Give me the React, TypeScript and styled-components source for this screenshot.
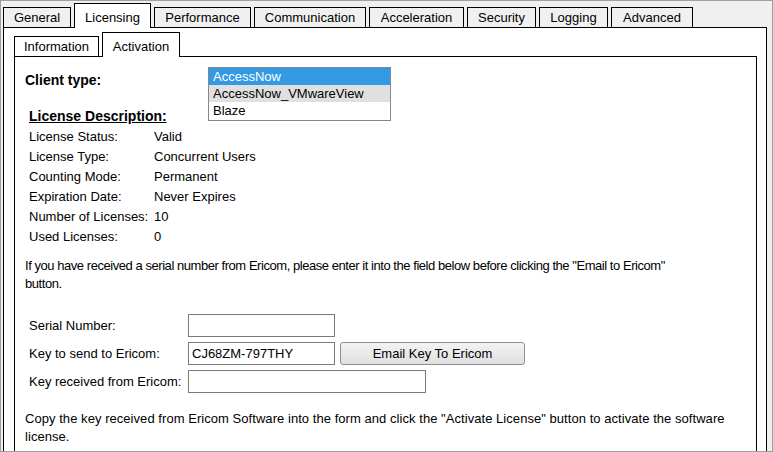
import React from "react";
import styled, { createGlobalStyle } from "styled-components";

const Global = createGlobalStyle`
  html, body { margin: 0; padding: 0; background: #f0f0f0; }
  body {
    font-family: "Liberation Sans", Arial, sans-serif;
    font-size: 13px;
    color: #000;
  }
`;

const Window = styled.div`
  width: 773px;
  height: 452px;
  box-sizing: border-box;
  border: 1px solid #a0a0a0;
  background: #f0f0f0;
  overflow: hidden;
  padding: 2px 5px 0 2px;
  display: flex;
  flex-direction: column;
`;

const TabStrip = styled.div`
  display: flex;
  align-items: flex-end;
  gap: 3px;
`;

const Tab = styled.div<{ $active?: boolean; $w: number }>`
  box-sizing: border-box;
  width: ${(p) => p.$w}px;
  border: 1px solid #000;
  border-bottom: none;
  text-align: center;
  line-height: 18px;
  white-space: nowrap;
  padding: ${(p) => (p.$active ? "5px 0 1px" : "1px 0 0")};
  margin-bottom: ${(p) => (p.$active ? "-1px" : "0")};
  background: ${(p) => (p.$active ? "#fff" : "transparent")};
  position: relative;
  z-index: ${(p) => (p.$active ? 1 : 0)};
`;

const Panel = styled.div<{ $outer?: boolean }>`
  flex: 1;
  display: flex;
  flex-direction: column;
  background: #fff;
  border: 1px solid #000;
  border-bottom: none;
  padding: ${(p) => (p.$outer ? "4px 9px 0 10px" : "0")};
`;

const Body = styled.div`
  padding: 10px 0 0 10px;
`;

const TopGrid = styled.div`
  display: grid;
  grid-template-columns: 183px 183px;
  grid-template-rows: 21px auto;
`;

const ClientLabel = styled.div`
  grid-column: 1;
  grid-row: 1;
  font-weight: bold;
  font-size: 14px;
  line-height: 16px;
  padding-top: 5px;
`;

const SectionTitle = styled.div`
  grid-column: 1;
  grid-row: 2;
  font-weight: bold;
  font-size: 14px;
  line-height: 16px;
  text-decoration: underline;
  white-space: nowrap;
  margin: 20px 0 0 4px;
`;

const ListBox = styled.div`
  grid-column: 2;
  grid-row: 1 / span 2;
  align-self: start;
  box-sizing: border-box;
  height: 54px;
  border: 1px solid #828790;
  background: #fff;
`;

const ListItem = styled.div<{ $state?: "selected" | "hover" }>`
  line-height: 17px;
  padding-left: 4px;
  white-space: nowrap;
  background: ${(p) =>
    p.$state === "selected" ? "#3399e3" : p.$state === "hover" ? "#e0e0e0" : "transparent"};
  color: ${(p) => (p.$state === "selected" ? "#fff" : "#000")};
`;

const InfoGrid = styled.div`
  display: grid;
  grid-template-columns: 125px auto;
  grid-auto-rows: 20px;
  line-height: 20px;
  margin: 3px 0 0 4px;
  white-space: nowrap;
`;

const Paragraph = styled.p<{ $top: number; $tight?: boolean }>`
  margin: ${(p) => p.$top}px 0 0 0;
  font-size: 13px;
  line-height: 18px;
  white-space: nowrap;
  letter-spacing: ${(p) => (p.$tight ? "-0.45px" : "0.05px")};
`;

const FieldGrid = styled.div`
  display: grid;
  grid-template-columns: 159px auto;
  row-gap: 5px;
  align-items: center;
  margin: 21px 0 0 4px;
  white-space: nowrap;
`;

const FieldCell = styled.div`
  display: flex;
  gap: 5px;
  align-items: center;
`;

const TextField = styled.input<{ $w: number }>`
  box-sizing: border-box;
  width: ${(p) => p.$w}px;
  height: 23px;
  border: 1px solid #7a7a7a;
  padding: 0 3px;
  margin: 0;
  font-family: "Liberation Sans", Arial, sans-serif;
  font-size: 13px;
  color: #000;
  background: #fff;
  outline: none;
`;

const Button = styled.button`
  box-sizing: border-box;
  width: 185px;
  height: 23px;
  margin: 0;
  padding: 0;
  border: 1px solid #8e8e8e;
  border-radius: 3px;
  background: linear-gradient(#f3f3f3, #e0e0e0);
  font-family: "Liberation Sans", Arial, sans-serif;
  font-size: 13px;
  color: #000;
`;

const topTabs = [
  { label: "General", w: 68 },
  { label: "Licensing", w: 77, active: true },
  { label: "Performance", w: 97 },
  { label: "Communication", w: 112 },
  { label: "Acceleration", w: 95 },
  { label: "Security", w: 69 },
  { label: "Logging", w: 69 },
  { label: "Advanced", w: 82 },
];

const subTabs = [
  { label: "Information", w: 85 },
  { label: "Activation", w: 78, active: true },
];

const info: [string, string][] = [
  ["License Status:", "Valid"],
  ["License Type:", "Concurrent Users"],
  ["Counting Mode:", "Permanent"],
  ["Expiration Date:", "Never Expires"],
  ["Number of Licenses:", "10"],
  ["Used Licenses:", "0"],
];

export default function App() {
  return (
    <>
      <Global />
      <Window>
        <TabStrip>
          {topTabs.map((t) => (
            <Tab key={t.label} $w={t.w} $active={t.active}>
              {t.label}
            </Tab>
          ))}
        </TabStrip>
        <Panel $outer>
          <TabStrip>
            {subTabs.map((t) => (
              <Tab key={t.label} $w={t.w} $active={t.active}>
                {t.label}
              </Tab>
            ))}
          </TabStrip>
          <Panel>
            <Body>
              <TopGrid>
                <ClientLabel>Client type:</ClientLabel>
                <ListBox>
                  <ListItem $state="selected">AccessNow</ListItem>
                  <ListItem $state="hover">AccessNow_VMwareView</ListItem>
                  <ListItem>Blaze</ListItem>
                </ListBox>
                <SectionTitle>License Description:</SectionTitle>
              </TopGrid>
              <InfoGrid>
                {info.map(([k, v]) => (
                  <React.Fragment key={k}>
                    <span>{k}</span>
                    <span>{v}</span>
                  </React.Fragment>
                ))}
              </InfoGrid>
              <Paragraph $top={10} $tight>
                If you have received a serial number from Ericom, please enter it into the field below before clicking the "Email to Ericom"
                <br />
                button.
              </Paragraph>
              <FieldGrid>
                <span>Serial Number:</span>
                <FieldCell>
                  <TextField $w={147} defaultValue="" readOnly />
                </FieldCell>
                <span>Key to send to Ericom:</span>
                <FieldCell>
                  <TextField $w={147} defaultValue="CJ68ZM-797THY" readOnly />
                  <Button type="button">Email Key To Ericom</Button>
                </FieldCell>
                <span>Key received from Ericom:</span>
                <FieldCell>
                  <TextField $w={238} defaultValue="" readOnly />
                </FieldCell>
              </FieldGrid>
              <Paragraph $top={17}>
                Copy the key received from Ericom Software into the form and click the "Activate License" button to activate the software
                <br />
                license.
              </Paragraph>
            </Body>
          </Panel>
        </Panel>
      </Window>
    </>
  );
}
